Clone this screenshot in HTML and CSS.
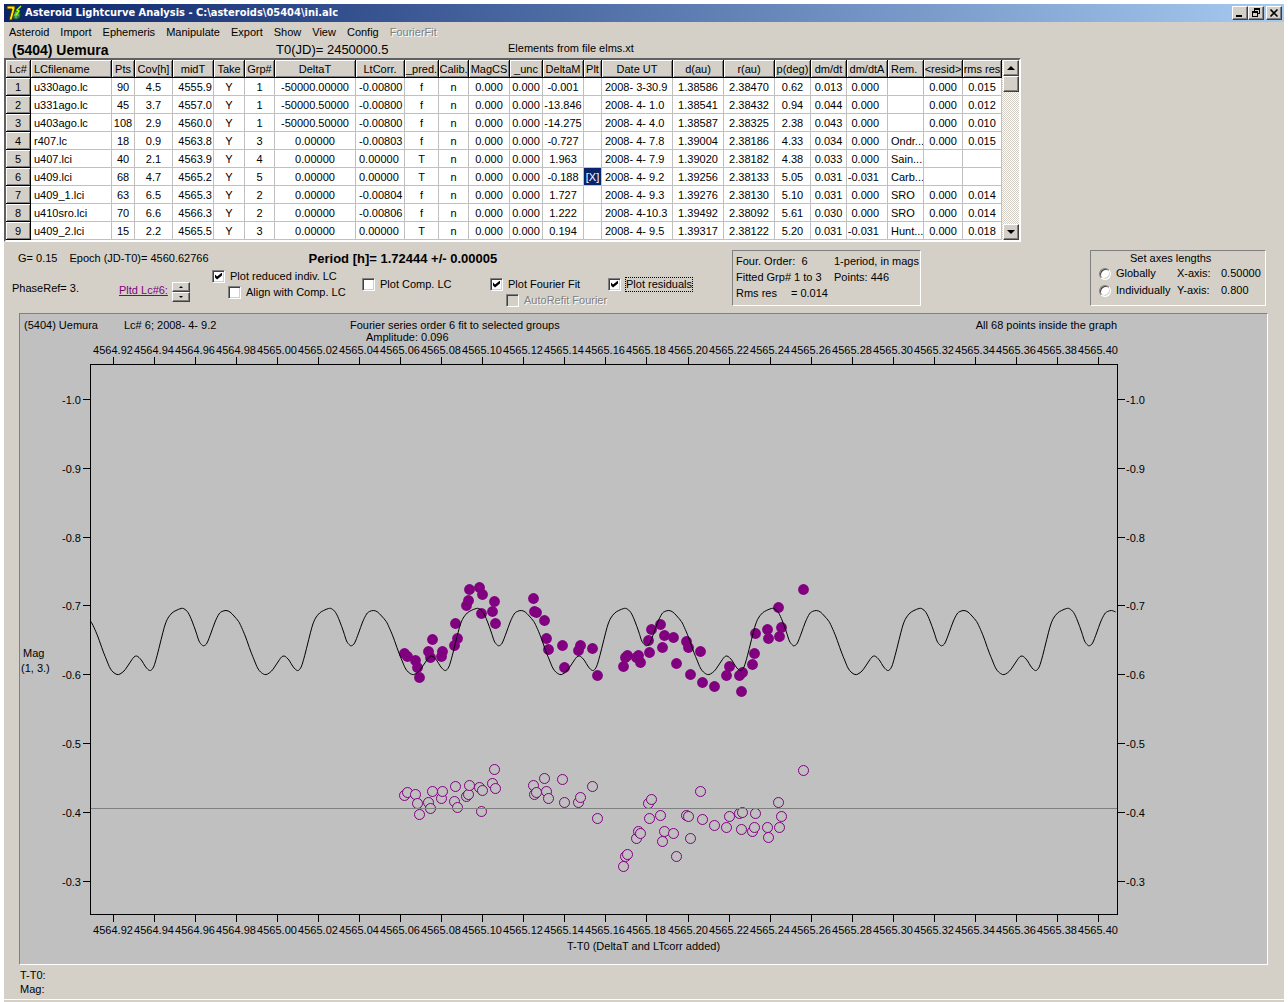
FILE: index.html
```html
<!DOCTYPE html>
<html lang="en">
<head>
<meta charset="utf-8">
<title>Asteroid Lightcurve Analysis</title>
<link rel="stylesheet" href="styles.css">
</head>
<body>
<div class="window">
  <header class="titlebar">
    <svg class="app-icon" viewBox="0 0 16 16" aria-hidden="true">
      <circle cx="10" cy="10" r="4.5" fill="#2f7d4a" stroke="#173d2a"/>
      <path d="M7 10h6M10 7v6" stroke="#7fd0a0"/>
      <path d="M1 1h8v3L6 15H3L6 4H1z" fill="#ffe600" stroke="#3c3000"/>
      <path d="M15 1l-4 4 2 1-3 4" fill="none" stroke="#9dff00" stroke-width="1.5"/>
    </svg>
    <h1 class="title">Asteroid Lightcurve Analysis - C:\asteroids\05404\ini.alc</h1>
    <div class="window-buttons">
      <button class="bevel win-btn" type="button" aria-label="Minimize"><svg viewBox="0 0 12 10" shape-rendering="crispEdges"><path d="M2 7h6v2H2z"/></svg></button>
      <button class="bevel win-btn" type="button" aria-label="Restore"><svg viewBox="0 0 12 10" shape-rendering="crispEdges"><path d="M4 0h6v6H8V5h1V2H5v1H4zM2 3h6v6H2zM3 5v3h4V5z" fill-rule="evenodd"/></svg></button>
      <button class="bevel win-btn win-close" type="button" aria-label="Close"><svg viewBox="0 0 12 10"><path d="M2.500 1.500l7 7M9.500 1.500l-7 7" stroke="#000" stroke-width="1.600"/></svg></button>
    </div>
  </header>

  <nav class="menubar">
    <button type="button">Asteroid</button>
    <button type="button">Import</button>
    <button type="button">Ephemeris</button>
    <button type="button">Manipulate</button>
    <button type="button">Export</button>
    <button type="button">Show</button>
    <button type="button">View</button>
    <button type="button">Config</button>
    <button type="button" disabled>FourierFit</button>
  </nav>

  <div class="object-info">
    <h2 class="object-name">(5404) Uemura</h2>
    <span class="object-epoch">T0(JD)= 2450000.5</span>
    <span>Elements from file elms.xt</span>
  </div>

  <div class="grid-box">
    <table class="lc-table">
      <colgroup>
        <col class="w25"><col class="w81"><col class="w23"><col class="w38"><col class="w41"><col class="w31"><col class="w30"><col class="w81"><col class="w49"><col class="w34"><col class="w30"><col class="w41"><col class="w33"><col class="w41"><col class="w18"><col class="w71"><col class="w51"><col class="w51"><col class="w36"><col class="w36"><col class="w41"><col class="w36"><col class="w39"><col class="w39">
      </colgroup>
      <thead>
        <tr><th>Lc#</th><th class="left">LCfilename</th><th>Pts</th><th>Cov[h]</th><th>midT</th><th>Take</th><th>Grp#</th><th>DeltaT</th><th>LtCorr.</th><th>_pred.</th><th>Calib.</th><th>MagCS</th><th>_unc</th><th>DeltaM</th><th>Plt</th><th>Date UT</th><th>d(au)</th><th>r(au)</th><th>p(deg)</th><th>dm/dt</th><th>dm/dtA</th><th class="left">Rem.</th><th>&lt;resid&gt;</th><th>rms res</th></tr>
      </thead>
      <tbody id="lc-rows"></tbody>
    </table>
    <div class="scrollbar">
      <button class="bevel scroll-btn" type="button" aria-label="Scroll up"><svg viewBox="0 0 8 4"><path d="M4 0l4 4H0z"/></svg></button>
      <div class="bevel scroll-thumb"></div>
      <button class="bevel scroll-btn scroll-down" type="button" aria-label="Scroll down"><svg viewBox="0 0 8 4"><path d="M0 0h8L4 4z"/></svg></button>
    </div>
  </div>

  <div class="controls">
    <div class="controls-main">
      <div class="readouts">
        <span>G= 0.15</span>
        <span>Epoch (JD-T0)= 4560.62766</span>
        <strong class="period">Period [h]= 1.72444 +/- 0.00005</strong>
      </div>
      <div class="options">
        <span class="phase">PhaseRef= 3.</span>
        <a class="plotted" href="#chart">Pltd Lc#6:</a>
        <div class="spinner">
          <button class="bevel" type="button" aria-label="Next lightcurve"><svg viewBox="0 0 4 2"><path d="M2 0l2 2H0z"/></svg></button>
          <button class="bevel" type="button" aria-label="Previous lightcurve"><svg viewBox="0 0 4 2"><path d="M0 0h4L2 2z"/></svg></button>
        </div>
        <div class="check-group high">
          <label class="check"><input type="checkbox" checked><span>Plot reduced indiv. LC</span></label>
          <label class="check nested"><input type="checkbox"><span>Align with Comp. LC</span></label>
        </div>
        <div class="check-group">
          <label class="check"><input type="checkbox"><span>Plot Comp. LC</span></label>
        </div>
        <div class="check-group">
          <label class="check"><input type="checkbox" checked><span>Plot Fourier Fit</span></label>
          <label class="check nested disabled"><input type="checkbox" disabled><span>AutoRefit Fourier</span></label>
        </div>
        <div class="check-group">
          <label class="check"><input type="checkbox" checked><span class="focused">Plot residuals</span></label>
        </div>
      </div>
    </div>
    <section class="panel fit-panel">
      <span>Four. Order:&nbsp; 6</span><span>1-period, in mags</span>
      <span>Fitted Grp# 1 to 3</span><span>Points: 446</span>
      <span class="rms"><span>Rms res</span><span>= 0.014</span></span>
    </section>
    <section class="panel axes-panel">
      <h3>Set axes lengths</h3>
      <label class="check"><input type="radio" name="axes"><span>Globally</span></label><span>X-axis:</span><span>0.50000</span>
      <label class="check"><input type="radio" name="axes"><span>Individually</span></label><span>Y-axis:</span><span>0.800</span>
    </section>
  </div>

  <main class="chart-panel">
    <svg id="chart" class="chart" viewBox="20 314 1247 650" role="img" aria-label="Lightcurve with Fourier fit and residuals">
      <text x="24" y="329">(5404) Uemura</text>
      <text x="124" y="329">Lc# 6; 2008- 4- 9.2</text>
      <text x="350" y="329">Fourier series order 6 fit to selected groups</text>
      <text x="366" y="341">Amplitude: 0.096</text>
      <text x="1117" y="329" text-anchor="end">All 68 points inside the graph</text>
      <text x="23" y="657">Mag</text>
      <text x="21" y="672">(1, 3.)</text>
      <text x="567" y="950">T-T0 (DeltaT and LTcorr added)</text>
    </svg>
  </main>

  <footer class="cursor-readout">
    <div>T-T0:</div>
    <div>Mag:</div>
  </footer>
</div>
<script src="app.js"></script>
</body>
</html>
```
FILE: styles.css
```css
* { box-sizing: border-box; }
body {
  margin: 0;
  padding: 4px 4px 0;
  background: #fff;
  color: #000;
  font: 11px/13px "Liberation Sans", Arial, sans-serif;
}
button { font: inherit; color: inherit; padding: 0; }
h1, h2, h3 { margin: 0; font-size: inherit; font-weight: normal; }

.window { background: #d4d0c8; padding-bottom: 2px; }

.bevel {
  display: flex;
  align-items: center;
  justify-content: center;
  background: #d4d0c8;
  border: 1px solid;
  border-color: #fff #404040 #404040 #fff;
  box-shadow: inset -1px -1px #808080;
}

.titlebar {
  display: flex;
  align-items: center;
  height: 18px;
  padding: 0 2px;
  background: linear-gradient(to right, #0a246a, #a6caf0);
}
.app-icon { width: 16px; height: 16px; }
.title {
  flex: 1;
  padding-left: 3px;
  color: #fff;
  font: bold 11px/18px "DejaVu Sans Condensed", "DejaVu Sans", sans-serif;
}
.window-buttons { display: flex; }
.win-btn { width: 16px; height: 14px; }
.win-btn svg { width: 12px; height: 10px; }
.win-close { margin-left: 2px; }

.menubar { display: flex; gap: 11px; padding: 0 5px; height: 20px; }
.menubar button { border: 0; background: none; line-height: 20px; }
.menubar button:disabled { color: #808080; text-shadow: 1px 1px #fff; }

.object-info {
  display: grid;
  grid-template-columns: 264px 232px auto;
  padding-left: 8px;
  height: 16px;
}
.object-name { font: bold 14px/16px "Liberation Sans", Arial, sans-serif; }
.object-epoch { font-size: 13px; line-height: 16px; }

.grid-box {
  display: flex;
  width: max-content;
  border: 2px solid;
  border-color: #606060 #fff #fff #606060;
}
.lc-table { table-layout: fixed; width: 996px; border-spacing: 0; background: #fff; }
.w18 { width: 18px; } .w23 { width: 23px; } .w25 { width: 25px; } .w30 { width: 30px; }
.w31 { width: 31px; } .w33 { width: 33px; } .w34 { width: 34px; } .w36 { width: 36px; }
.w38 { width: 38px; } .w39 { width: 39px; } .w41 { width: 41px; } .w49 { width: 49px; }
.w51 { width: 51px; } .w71 { width: 71px; } .w81 { width: 81px; }
.lc-table th, .lc-table td {
  height: 18px;
  padding: 0;
  overflow: hidden;
  text-align: center;
  font-weight: normal;
  line-height: 16px;
  white-space: pre;
  border: 0 solid #c0c0c0;
  border-width: 0 1px 1px 0;
}
.lc-table th {
  background: #d4d0c8;
  border-color: #000;
  box-shadow: inset 1px 1px #fff, inset -1px -1px #808080;
}
.lc-table .left { text-align: left; padding-left: 3px; }
.lc-table .right { text-align: right; padding-right: 1px; }
.lc-table .right-wide { text-align: right; padding-right: 8px; }
.lc-table .selected { background: #0a246a; color: #fff; }

.scrollbar {
  display: flex;
  flex-direction: column;
  width: 17px;
  padding-left: 1px;
  background: repeating-conic-gradient(#fff 0 25%, #d4d0c8 0 50%) 0 0 / 2px 2px;
}
.scroll-btn, .scroll-thumb { width: 16px; height: 16px; }
.scroll-btn svg { width: 8px; height: 4px; }
.scroll-down { margin-top: auto; }

.controls { display: flex; align-items: flex-start; height: 71px; padding: 8px 18px 0 0; }
.controls-main { flex: 0 0 728px; }
.readouts { display: flex; gap: 12px; padding-left: 14px; height: 16px; align-items: center; }
.period { font-size: 13px; margin-left: 88px; }
.options {
  display: grid;
  grid-template-columns: 107px 53px 40px 150px 128px 118px auto;
  padding: 2px 0 0 8px;
}
.phase { padding-top: 14px; }
.plotted { padding-top: 16px; color: #800080; }
.spinner { padding-top: 14px; }
.spinner button { width: 18px; height: 10px; }
.spinner svg { width: 4px; height: 2px; }
.check-group { padding-top: 8px; }
.check-group.high { padding-top: 0; }
.check { display: flex; align-items: center; gap: 5px; height: 16px; }
.check.nested { margin-left: 16px; }
.check.disabled { color: #808080; text-shadow: 1px 1px #fff; }
.check .focused { outline: 1px dotted #000; }
.check input {
  appearance: none;
  flex: none;
  width: 13px;
  height: 13px;
  margin: 0;
  background: #fff;
  border: 1px solid;
  border-color: #808080 #fff #fff #808080;
  box-shadow: inset 1px 1px #404040, inset -1px -1px #d4d0c8;
}
.check input:disabled { background: #d4d0c8; }
.check input[type="radio"] { width: 12px; height: 12px; border-radius: 50%; }
.check input:checked::before {
  content: "";
  display: block;
  width: 7px;
  height: 7px;
  margin: 2px;
  background: #000;
  clip-path: polygon(0 29%, 29% 57%, 100% 0, 100% 43%, 29% 100%, 0 71%);
}

.panel { border: 1px solid; border-color: #808080 #fff #fff #808080; height: 56px; }
.fit-panel {
  display: grid;
  grid-template-columns: 98px auto;
  grid-auto-rows: 16px;
  width: 189px;
  padding: 2px 0 0 3px;
  line-height: 16px;
  white-space: nowrap;
}
.fit-panel .rms { display: flex; gap: 14px; }
.axes-panel {
  display: grid;
  grid-template-columns: 78px 44px auto;
  grid-template-rows: 14px 17px 17px;
  align-items: center;
  width: 176px;
  margin-left: auto;
  padding-left: 8px;
}
.axes-panel h3 { grid-column: 1 / -1; padding-left: 31px; }

.chart-panel {
  margin: 0 16px 0 15px;
  background: #c0c0c0;
  border: 1px solid;
  border-color: #808080 #fff #fff #808080;
}
.chart { display: block; width: 100%; height: auto; font-size: 11px; }
.axis { fill: none; stroke: #000; shape-rendering: crispEdges; }
.zero { stroke: #808080; shape-rendering: crispEdges; }
.fit { fill: none; stroke: #000; }
.point { fill: #800080; }
.residual { fill: #c0c0c0; stroke: #800080; }

.cursor-readout { padding: 3px 16px; line-height: 14px; border-bottom: 1px solid #fff; }
```
FILE: app.js
```js
const rows = [
  ["1","u330ago.lc","90","4.5","4555.9","Y","1","-50000.00000","-0.00800","f","n","0.000","0.000","-0.001","","2008- 3-30.9","1.38586","2.38470","0.62","0.013","0.000","","0.000","0.015"],
  ["2","u331ago.lc","45","3.7","4557.0","Y","1","-50000.50000","-0.00800","f","n","0.000","0.000","-13.846","","2008- 4- 1.0","1.38541","2.38432","0.94","0.044","0.000","","0.000","0.012"],
  ["3","u403ago.lc","108","2.9","4560.0","Y","1","-50000.50000","-0.00800","f","n","0.000","0.000","-14.275","","2008- 4- 4.0","1.38587","2.38325","2.38","0.043","0.000","","0.000","0.010"],
  ["4","r407.lc","18","0.9","4563.8","Y","3","0.00000","-0.00803","f","n","0.000","0.000","-0.727","","2008- 4- 7.8","1.39004","2.38186","4.33","0.034","0.000","Ondr...","0.000","0.015"],
  ["5","u407.lci","40","2.1","4563.9","Y","4","0.00000","0.00000","T","n","0.000","0.000","1.963","","2008- 4- 7.9","1.39020","2.38182","4.38","0.033","0.000","Sain...","",""],
  ["6","u409.lci","68","4.7","4565.2","Y","5","0.00000","0.00000","T","n","0.000","0.000","-0.188","[X]","2008- 4- 9.2","1.39256","2.38133","5.05","0.031","-0.031","Carb...","",""],
  ["7","u409_1.lci","63","6.5","4565.3","Y","2","0.00000","-0.00804","f","n","0.000","0.000","1.727","","2008- 4- 9.3","1.39276","2.38130","5.10","0.031","0.000","SRO","0.000","0.014"],
  ["8","u410sro.lci","70","6.6","4566.3","Y","2","0.00000","-0.00806","f","n","0.000","0.000","1.222","","2008- 4-10.3","1.39492","2.38092","5.61","0.030","0.000","SRO","0.000","0.014"],
  ["9","u409_2.lci","15","2.2","4565.5","Y","3","0.00000","0.00000","T","n","0.000","0.000","0.194","","2008- 4- 9.5","1.39317","2.38122","5.20","0.031","-0.031","Hunt...","0.000","0.018"]
];
const cellClass = { 1: "left", 4: "right", 8: "left", 15: "left", 20: "right-wide", 21: "left" };
const body = document.getElementById("lc-rows");
for (const row of rows) {
  const tr = body.insertRow();
  row.forEach((value, i) => {
    const cell = document.createElement(i === 0 ? "th" : "td");
    cell.textContent = value;
    if (cellClass[i]) cell.className = cellClass[i];
    if (value === "[X]") cell.className = "selected";
    tr.append(cell);
  });
}

const chart = document.getElementById("chart");
function add(name, attrs, text) {
  const el = document.createElementNS("http://www.w3.org/2000/svg", name);
  for (const key in attrs) el.setAttribute(key, attrs[key]);
  if (text) el.textContent = text;
  chart.append(el);
}

// Axes
const left = 90, right = 1117, top_ = 364, bottom = 914;
let d = `M${left}.5 ${top_}.5H${right}.5V${bottom}.5H${left}.5Z`;
for (let i = 0; i <= 24; i++) {
  const x = Math.round(112.7 + i * 41.06);
  d += `M${x}.5 ${top_ - 7}V${top_}M${x}.5 ${bottom}V${bottom + 8}`;
  const label = (4564.92 + i * 0.02).toFixed(2);
  add("text", { x: x, y: 354, "text-anchor": "middle" }, label);
  add("text", { x: x, y: 934, "text-anchor": "middle" }, label);
}
for (let i = 0; i <= 7; i++) {
  const y = Math.round(399 + i * 68.8);
  d += `M${left - 7} ${y}.5H${left}M${right} ${y}.5H${right + 8}`;
  const label = (-1 + i * 0.1).toFixed(1);
  add("text", { x: 81, y: y + 5, "text-anchor": "end" }, label);
  add("text", { x: 1126, y: y + 5 }, label);
}
add("path", { d, class: "axis" });

// Light curve points and residuals: [x, magnitude y] and [x, residual y]
const observed = [
  [404,653],[407,656],[415,660],[417,667],[419,677],[432,639],[428,651],[430,657],[442,651],[441,656],[455,623],[457,638],[454,645],[466,605],[468,600],[469,589],[479,587],[482,594],[481,613],[494,601],[492,611],[495,623],[533,598],[534,611],[536,612],[544,620],[546,638],[548,649],[562,645],[564,667],[580,645],[578,650],[592,648],[597,675],
  [623,666],[625,657],[627,655],[636,657],[638,655],[640,662],[649,652],[648,640],[651,629],[660,624],[664,635],[662,647],[673,637],[676,663],[690,674],[686,641],[688,647],[700,651],[702,682],[714,686],[726,675],[729,666],[739,675],[742,672],[741,691],[752,664],[754,653],[755,633],[767,629],[768,638],[778,607],[781,627],[779,636],[803,589]
];
const residuals = [
  [404,795],[407,792],[415,794],[417,803],[419,814],[428,802],[430,808],[432,791],[441,798],[442,791],[455,786],[454,801],[457,807],[466,796],[468,794],[469,785],[479,787],[482,790],[481,811],[494,769],[492,783],[495,788],[533,785],[534,794],[536,792],[544,778],[546,791],[548,798],[562,779],[564,802],[578,802],[580,797],[592,786],[597,818],
  [623,866],[625,856],[627,854],[636,838],[638,831],[640,833],[648,803],[651,799],[649,818],[660,815],[664,831],[662,841],[673,833],[676,856],[686,815],[688,816],[690,838],[700,791],[702,819],[714,825],[726,827],[729,816],[739,813],[742,812],[741,829],[752,831],[754,827],[755,813],[767,827],[768,837],[778,802],[781,816],[779,827],[803,770]
];
for (const [x, y] of observed) add("circle", { cx: x + 0.5, cy: y + 0.5, r: 5.4, class: "point" });
for (const [x, y] of residuals) add("circle", { cx: x + 0.5, cy: y + 0.5, r: 5, class: "residual" });
add("path", { d: `M${left + 1} 808.5H${right}`, class: "zero" });

// Fourier fit: one period of knots, repeated and joined with a smooth spline
const period = 147.6;
const knots = [[91,621.5],[94,627.5],[98,637],[103,651],[107,661],[110,668],[113,672],[117,674.5],[120,674],[124,671],[127,667],[131,661],[134,657],[136.5,656],[139,657.5],[142,661],[145,666],[148,669.5],[150.5,670.5],[153,668],[155,663],[158,652],[162,636],[165,625],[168,618],[172,613],[176,610.5],[181,608.5],[184,608.8],[188,612.5],[192,621],[196,632],[199,641],[202,645],[204,645.7],[207,643],[211,633],[215,622],[219,614],[222,611.5],[226,610.5],[230,612],[234,616]];
const curve = [];
for (let n = 0; n < 7; n++) for (const [x, y] of knots) {
  if (x + n * period <= right) curve.push([x + n * period, y]);
}
let fit = `M${curve[0]}`;
for (let i = 0; i < curve.length - 1; i++) {
  const a = curve[i - 1] || curve[i], b = curve[i], c = curve[i + 1], e = curve[i + 2] || c;
  fit += `C${b[0] + (c[0] - a[0]) / 6} ${b[1] + (c[1] - a[1]) / 6} ${c[0] - (e[0] - b[0]) / 6} ${c[1] - (e[1] - b[1]) / 6} ${c[0]} ${c[1]}`;
}
add("path", { d: fit, class: "fit" });
```
